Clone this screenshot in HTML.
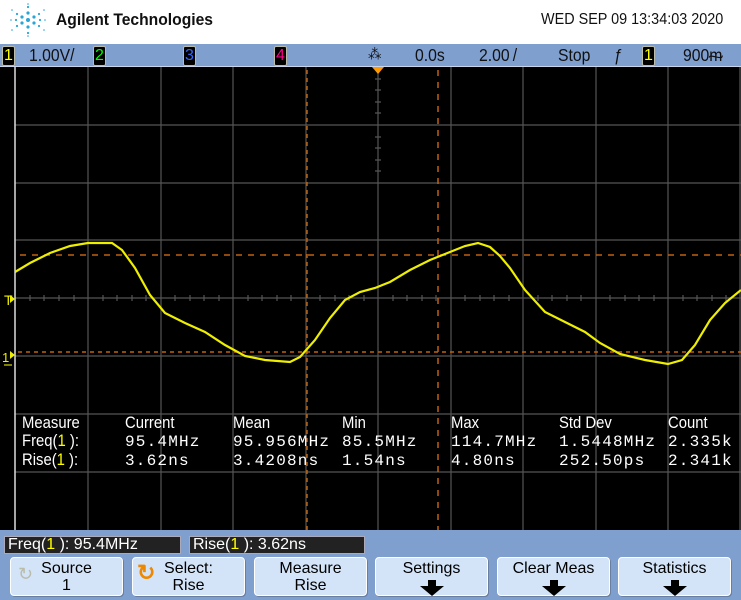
<!DOCTYPE html>
<html><head><meta charset="utf-8"><style>
*{margin:0;padding:0;box-sizing:border-box}
body{width:741px;height:600px;overflow:hidden;background:#fff;font-family:"Liberation Sans",sans-serif;position:relative}
.abs{position:absolute;white-space:nowrap}
.sb{top:44px;left:0;width:741px;height:23px;background:#7f9fcf;border-bottom:1px solid #c8d4ea}
.ch{position:absolute;top:2px;width:13px;height:20px;background:#000;border:1px solid #bba;border-radius:2px;font-size:16px;line-height:18px;text-align:center}
.st{position:absolute;top:1px;font-size:17.5px;color:#111;transform:scaleX(.9);transform-origin:left}
.mh{font-family:"Liberation Sans",sans-serif;font-size:16.5px;color:#fff;transform:scaleX(.9);transform-origin:left}
.mv{font-family:"Liberation Mono",monospace;font-size:16px;color:#fff;letter-spacing:1.2px}
.y{color:#ff0}
.bot{top:530px;left:0;width:741px;height:70px;background:#7f9fcf}
.bar{position:absolute;top:536px;height:18px;background:#222;border:1px solid #aab;font-size:16px;color:#fff;line-height:16px;padding-left:3px}
.btn{position:absolute;top:557px;width:113px;height:39px;background:#d3e4f8;border:1px solid #fff;border-radius:4px;box-shadow:1px 1px 0 #6a7f9f;font-size:16px;line-height:17px;text-align:center;color:#000;padding-top:2px}
.arr{display:block;margin:2px auto 0;width:0;height:0;border-left:12px solid transparent;border-right:12px solid transparent;border-top:10px solid #000;position:relative}
.arr:before{content:"";position:absolute;left:-4px;top:-16px;width:8px;height:7px;background:#000}
</style></head><body>
<svg class="abs" style="left:8px;top:3px" width="40" height="34" viewBox="0 0 40 34">
<g fill="#29a6d6">
<circle cx="20" cy="17" r="2"/><circle cx="14" cy="14" r="1.6"/><circle cx="26" cy="14" r="1.6"/><circle cx="14" cy="20" r="1.6"/><circle cx="26" cy="20" r="1.6"/><circle cx="20" cy="10" r="1.6"/><circle cx="20" cy="24" r="1.6"/>
<circle cx="9" cy="11" r="1.1"/><circle cx="31" cy="11" r="1.1"/><circle cx="9" cy="23" r="1.1"/><circle cx="31" cy="23" r="1.1"/><circle cx="20" cy="4" r="1.1"/><circle cx="20" cy="30" r="1.1"/><circle cx="8" cy="17" r="1.1"/><circle cx="32" cy="17" r="1.1"/>
<circle cx="3" cy="17" r=".8"/><circle cx="37" cy="17" r=".8"/><circle cx="4" cy="7" r=".8"/><circle cx="36" cy="7" r=".8"/><circle cx="4" cy="27" r=".8"/><circle cx="36" cy="27" r=".8"/><circle cx="20" cy="1" r=".8"/><circle cx="20" cy="33" r=".8"/>
</g></svg>
<div class="abs" style="left:56px;top:10px;font-size:17px;font-weight:bold;color:#111;transform:scaleX(.92);transform-origin:left">Agilent Technologies</div>
<div class="abs" style="left:541px;top:11px;font-size:16px;color:#111;transform:scaleX(.9);transform-origin:left">WED SEP 09 13:34:03 2020</div>

<div class="abs sb">
<div class="ch" style="left:2px;color:#ff0">1</div>
<div class="st" style="left:29px">1.00V/</div>
<div class="ch" style="left:93px;color:#0f0">2</div>
<div class="ch" style="left:183px;color:#36f">3</div>
<div class="ch" style="left:274px;color:#f08">4</div>
<div class="st" style="left:368px;font-size:15px">⁂</div>
<div class="st" style="left:415px">0.0s</div>
<div class="st" style="left:479px">2.00&#8239;/</div>
<div class="st" style="left:558px">Stop</div>
<div class="st" style="left:614px">ƒ</div>
<div class="ch" style="left:642px;color:#ff0">1</div>
<div class="st" style="left:683px">900ᵯ</div>
</div>

<svg class="abs" style="left:0;top:67px" width="741" height="463" viewBox="0 67 741 463">
<rect x="0" y="67" width="741" height="463" fill="#000"/>
<g stroke="#555" stroke-width="1.2">
<line x1="88" y1="67" x2="88" y2="530"/><line x1="161" y1="67" x2="161" y2="530"/><line x1="233" y1="67" x2="233" y2="530"/><line x1="306" y1="67" x2="306" y2="530"/><line x1="378" y1="67" x2="378" y2="530"/><line x1="451" y1="67" x2="451" y2="530"/><line x1="523" y1="67" x2="523" y2="530"/><line x1="596" y1="67" x2="596" y2="530"/><line x1="668" y1="67" x2="668" y2="530"/><line x1="740" y1="67" x2="740" y2="530"/>
<line x1="15" y1="125" x2="741" y2="125"/><line x1="15" y1="183" x2="741" y2="183"/><line x1="15" y1="240" x2="741" y2="240"/><line x1="15" y1="298" x2="741" y2="298"/><line x1="15" y1="356" x2="741" y2="356"/><line x1="15" y1="414" x2="741" y2="414"/><line x1="15" y1="472" x2="741" y2="472"/>
</g>
<g stroke="#555" stroke-width="1.2">
<path d="M30 295v6M44 295v6M59 295v6M74 295v6M103 295v6M117 295v6M132 295v6M146 295v6M175 295v6M190 295v6M204 295v6M219 295v6M248 295v6M262 295v6M277 295v6M291 295v6M320 295v6M335 295v6M349 295v6M364 295v6M393 295v6M407 295v6M422 295v6M436 295v6M465 295v6M480 295v6M494 295v6M509 295v6M538 295v6M552 295v6M567 295v6M581 295v6M610 295v6M625 295v6M639 295v6M654 295v6M683 295v6M697 295v6M712 295v6M726 295v6"/>
<path d="M375 79h6M375 90h6M375 102h6M375 113h6M375 137h6M375 148h6M375 160h6M375 171h6"/>
</g>
<line x1="15" y1="67" x2="15" y2="530" stroke="#ddd" stroke-width="1.5"/>
<g stroke="#c06010" stroke-width="1.5" stroke-dasharray="6,6">
<line x1="20" y1="255" x2="741" y2="255"/><line x1="438" y1="70" x2="438" y2="530"/>
</g>
<g stroke="#c06010" stroke-width="1.5" stroke-dasharray="4,4">
<line x1="18" y1="352" x2="741" y2="352"/><line x1="307" y1="70" x2="307" y2="530"/>
</g>
<polygon points="372,67 384,67 378,74" fill="#f90"/>
<polyline fill="none" stroke="#ee0" stroke-width="2.2" points="15,272 30,263 50,253 70,246 88,243 112,243 122,250 135,268 150,295 165,313 185,323 205,332 225,345 245,356 265,360 290,362 300,357 315,340 330,318 345,300 360,292 375,288 390,282 410,270 430,260 450,252 465,246 478,243 490,247 500,256 510,268 525,290 545,312 565,322 585,332 600,343 620,354 645,360 668,364 682,360 695,345 710,320 725,303 741,290"/>
<text x="4" y="305" fill="#ee0" font-size="14" font-family="Liberation Sans">T</text>
<polygon points="10,295 15,299 10,303" fill="#ee0"/>
<text x="2" y="362" fill="#ee0" font-size="13" font-family="Liberation Sans">1</text>
<polygon points="10,351 15,355 10,359" fill="#ee0"/>
<line x1="4" y1="365" x2="12" y2="365" stroke="#aa0" stroke-width="1.5"/>
</svg>

<div class="abs mh" style="left:22px;top:414px">Measure</div>
<div class="abs mh" style="left:22px;top:432px">Freq(<span class="y">1</span> ):</div>
<div class="abs mh" style="left:22px;top:451px">Rise(<span class="y">1</span> ):</div>
<div class="abs mh" style="left:125px;top:414px">Current</div>
<div class="abs mh" style="left:233px;top:414px">Mean</div>
<div class="abs mh" style="left:342px;top:414px">Min</div>
<div class="abs mh" style="left:451px;top:414px">Max</div>
<div class="abs mh" style="left:559px;top:414px">Std Dev</div>
<div class="abs mh" style="left:668px;top:414px">Count</div>
<div class="abs mv" style="left:125px;top:433px">95.4MHz</div>
<div class="abs mv" style="left:233px;top:433px">95.956MHz</div>
<div class="abs mv" style="left:342px;top:433px">85.5MHz</div>
<div class="abs mv" style="left:451px;top:433px">114.7MHz</div>
<div class="abs mv" style="left:559px;top:433px">1.5448MHz</div>
<div class="abs mv" style="left:668px;top:433px">2.335k</div>
<div class="abs mv" style="left:125px;top:452px">3.62ns</div>
<div class="abs mv" style="left:233px;top:452px">3.4208ns</div>
<div class="abs mv" style="left:342px;top:452px">1.54ns</div>
<div class="abs mv" style="left:451px;top:452px">4.80ns</div>
<div class="abs mv" style="left:559px;top:452px">252.50ps</div>
<div class="abs mv" style="left:668px;top:452px">2.341k</div>

<div class="abs bot"></div>
<div class="bar" style="left:4px;width:177px">Freq(<span class="y">1</span> ): 95.4MHz</div>
<div class="bar" style="left:189px;width:176px">Rise(<span class="y">1</span> ): 3.62ns</div>
<div class="btn" style="left:10px"><span style="position:absolute;left:7px;top:8px;color:#bba;font-size:18px">↻</span>Source<br>1</div>
<div class="btn" style="left:132px"><span style="position:absolute;left:4px;top:6px;color:#e80;font-size:22px;font-weight:bold">↻</span>Select:<br>Rise</div>
<div class="btn" style="left:254px">Measure<br>Rise</div>
<div class="btn" style="left:375px">Settings<span class="arr" style="top:7px"></span></div>
<div class="btn" style="left:497px">Clear Meas<span class="arr" style="top:7px"></span></div>
<div class="btn" style="left:618px">Statistics<span class="arr" style="top:7px"></span></div>
</body></html>
